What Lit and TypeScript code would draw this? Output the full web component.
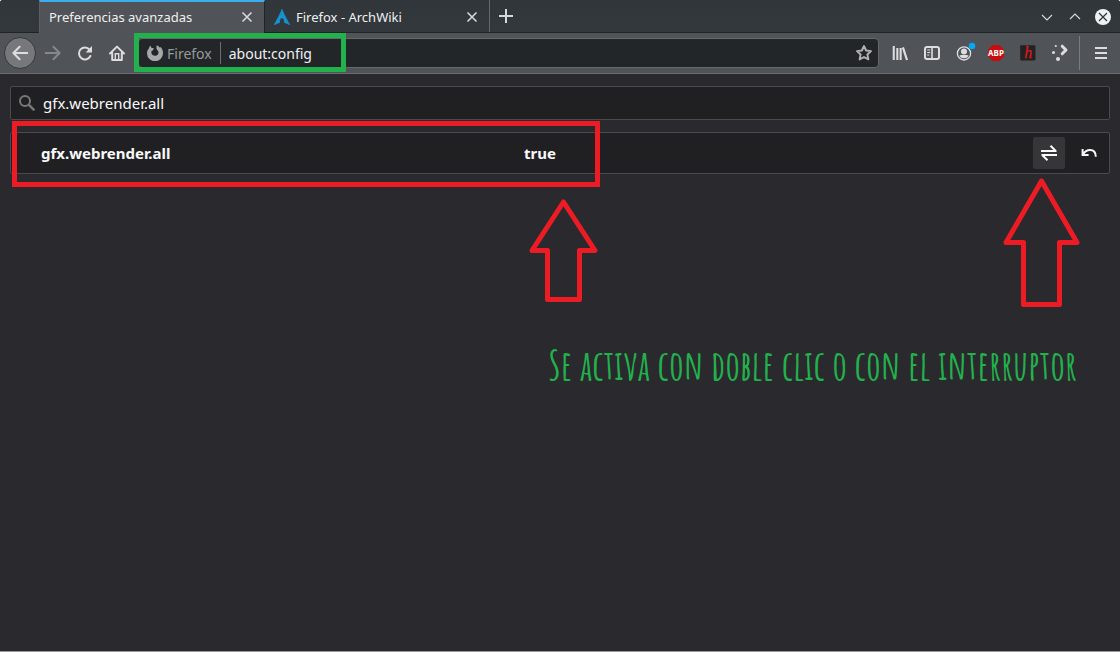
import { LitElement, html, css, svg } from "lit";
import { customElement, state } from "lit/decorators.js";

const closeIcon = html`<svg width="12" height="12" viewBox="0 0 12 12" fill="none" stroke="#d5d7d8" stroke-width="1.6"><path d="M1.5 1.5l9 9M10.5 1.5l-9 9" /></svg>`;

const backIcon = svg`<path d="M15.3 8H1.5M7.6 1.8L1.4 8l6.2 6.2" fill="none" stroke="currentColor" stroke-width="2" stroke-linecap="round" stroke-linejoin="round"/>`;
const forwardIcon = svg`<path d="M.7 8h13.8M8.4 1.8L14.6 8l-6.2 6.2" fill="none" stroke="currentColor" stroke-width="2" stroke-linecap="round" stroke-linejoin="round"/>`;
const reloadIcon = svg`<path d="M12.6 4.6A6 6 0 1 0 13.4 11" fill="none" stroke="currentColor" stroke-width="2" stroke-linecap="round"/><path d="M15 1v6.4H8.6z" fill="currentColor"/>`;
const homeIcon = svg`<path d="M1 8.500L8 1.600l7 6.900M3.200 8v6.900h9.600V8" fill="none" stroke="currentColor" stroke-width="2" stroke-linecap="round" stroke-linejoin="round"/><path d="M6.300 15V8.800h3.400V15" fill="none" stroke="currentColor" stroke-width="1.400"/>`;
const libraryIcon = svg`<path d="M.7 1h2.100v14H.7zM4.300 3h2.100v12H4.300zM7.600 3h2.100v12H7.600z" fill="currentColor"/><path d="M10.900 2.400L15 15" fill="none" stroke="currentColor" stroke-width="2.200"/>`;
const sidebarIcon = svg`<rect x="1" y="2" width="14" height="12" rx="2" fill="none" stroke="currentColor" stroke-width="2"/><path d="M8 2v12" stroke="currentColor" stroke-width="1.600"/><path d="M3.200 5h3M3.200 7.500h3M3.200 10h2" stroke="currentColor" stroke-width="1.100"/>`;
const accountIcon = svg`<circle cx="8" cy="8.400" r="6.600" fill="none" stroke="currentColor" stroke-width="1.300"/><circle cx="8" cy="6.400" r="3" fill="currentColor"/><path d="M3.300 11c1-1.400 2.500-1 4.700-1s3.700-.4 4.700 1A5.700 5.700 0 0 1 8 13.300 5.700 5.700 0 0 1 3.300 11z" fill="currentColor"/><circle cx="16" cy="1" r="3.300" fill="#00a8f5"/>`;
const hypothesisIcon = svg`<rect x=".2" y=".2" width="15.200" height="15.200" rx="1" fill="#222"/><text x="8.200" y="13" text-anchor="middle" font-family="Liberation Serif, serif" font-style="italic" font-size="16" fill="#d91820" stroke="#d91820" stroke-width=".3">h</text>`;
const abpIcon = svg`<path d="M4.700 0h6.600L16 4.700v6.600L11.300 16H4.700L0 11.300V4.700z" fill="#c70d0d"/><text x="8" y="11" text-anchor="middle" font-family="Noto Sans, sans-serif" font-weight="700" font-size="8" fill="#fff">ABP</text>`;
const dotsIcon = svg`<circle cx="3.800" cy="1" r="1.100" fill="currentColor"/><circle cx="1.500" cy="7.400" r="1.500" fill="currentColor"/><circle cx="6" cy="14" r="2" fill="currentColor"/><path d="M10.200 1.200L14 5l-3.800 3.800" fill="none" stroke="currentColor" stroke-width="3" stroke-linecap="round" stroke-linejoin="round"/>`;
const menuIcon = svg`<path d="M2 3h12M2 8h12M2 13h12" stroke="currentColor" stroke-width="2"/>`;

const glyph = (content: unknown) => html`<svg class="glyph" width="16" height="16" viewBox="0 0 16 16">${content}</svg>`;

@customElement("app-root")
export class AppRoot extends LitElement {
  @state() private enabled = true;

  static styles = css`
    :host {
      display: block;
      font-family: "Noto Sans", "Open Sans", sans-serif;
      color: #eff0f1;
    }
    * { box-sizing: border-box; }
    svg { display: block; flex: none; }
    .glyph { overflow: visible; }
    button {
      display: flex;
      align-items: center;
      justify-content: center;
      flex: none;
      margin: 0;
      padding: 0;
      border: 0;
      background: none;
      color: inherit;
      font: inherit;
    }
    input {
      flex: 1;
      min-width: 0;
      margin: 0;
      padding: 0;
      border: 0;
      outline: 0;
      background: none;
      color: inherit;
      font: inherit;
    }
    .window {
      position: relative;
      display: flex;
      flex-direction: column;
      min-height: 100vh;
      overflow: hidden;
      border-bottom: 1px solid #98989a;
      border-radius: 3px 3px 0 0;
      background: #2a2a2e;
    }
    .tabs {
      display: flex;
      height: 33px;
      padding-left: 39px;
      border-bottom: 1px solid #202427;
      background: linear-gradient(#30363a, #33383c);
      font-size: 13px;
    }
    .tab {
      display: flex;
      align-items: center;
      flex: 0 1 225px;
      min-width: 0;
      padding: 2px 11px 0 9px;
      border-right: 1px solid #66696c;
    }
    .tab.active {
      flex-basis: 226px;
      height: 33px;
      border-top: 2px solid #3daee9;
      border-left: 1px solid #5b5f62;
      border-right-color: #202427;
      padding-top: 0;
      padding-bottom: 1px;
      background: #505357;
    }
    .tab a {
      flex: 1;
      overflow: hidden;
      white-space: nowrap;
      color: inherit;
      text-decoration: none;
    }
    .favicon { margin-right: 6px; }
    .newtab { width: 32px; }
    .controls {
      display: flex;
      align-items: center;
      gap: 12px;
      margin-left: auto;
      padding: 2px 9px 0 0;
      color: #d5d7d8;
    }
    .controls button { width: 16px; }
    .toolbar {
      display: flex;
      align-items: center;
      height: 41px;
      padding: 0 3px 0 4px;
      border-bottom: 1px solid #6a6d70;
      background: #505357;
      color: #dcdddf;
    }
    .tool { width: 32px; height: 32px; }
    .back {
      margin-right: 1px;
      border: 1px solid #34383b;
      border-radius: 50%;
      background: #77787c;
    }
    .forward { color: #85888b; }
    .address {
      display: flex;
      align-items: center;
      flex: 1;
      min-width: 0;
      height: 30px;
      margin: 0 5px;
      padding: 0 6px 0 8px;
      border: 1px solid #66696c;
      border-radius: 4px;
      background: #232629;
      font-size: 14px;
    }
    .address input { color: #eff0f1; }
    .identity {
      display: flex;
      align-items: center;
      gap: 4px;
      height: 22px;
      margin-right: 8px;
      padding-right: 8px;
      border-right: 1px solid #6c6f71;
      color: #97999b;
    }
    .star { color: #b0b2b4; }
    .divider {
      width: 1px;
      height: 34px;
      margin: 0 5px 0 3px;
      background: #7a7d80;
    }
    .page {
      display: flex;
      flex-direction: column;
      gap: 12px;
      padding: 12px 10px;
      font-size: 15px;
      color: #f9f9fa;
    }
    .search {
      display: flex;
      align-items: center;
      gap: 8px;
      height: 34px;
      padding: 0 8px;
      border: 1px solid #4b4b4d;
      border-radius: 2px;
      background: #202023;
    }
    .prefs {
      width: 100%;
      border: 1px solid #4b4b4d;
      border-radius: 2px;
      border-spacing: 0;
      background: #202023;
      font-weight: 700;
      text-align: left;
    }
    .prefs th, .prefs td { height: 40px; padding: 0; }
    .prefs .name { width: 46%; padding-left: 30px; }
    .prefs .value { padding-left: 8px; }
    .actions {
      display: flex;
      justify-content: flex-end;
      gap: 8px;
      padding-right: 4px;
    }
    .action { width: 32px; height: 32px; border-radius: 2px; }
    .toggle { background: #363638; }
    .frame, .pointer, .caption { position: absolute; pointer-events: none; }
    .frame-address {
      left: 134px;
      top: 33px;
      width: 212px;
      height: 39px;
      border: 5px solid #22b14c;
    }
    .frame-pref {
      left: 12px;
      top: 121px;
      width: 588px;
      height: 66px;
      border: 5px solid #ed1c24;
    }
    .pointer {
      overflow: visible;
      fill: none;
      stroke: #ed1c24;
      stroke-width: 5;
      stroke-linejoin: round;
    }
    .pointer-value { left: 529px; top: 199px; }
    .pointer-toggle { right: 40px; top: 178px; }
    .caption {
      right: 43px;
      top: 336px;
      margin: 0;
      color: #22b14c;
      font: 700 41px/56px "Amatic SC", "Liberation Sans Narrow", "Liberation Sans", sans-serif;
      white-space: nowrap;
    }
  `;

  render() {
    return html`
      <div class="window">
        <nav class="tabs" aria-label="Pestañas">
          <div class="tab active">
            <a href="#config">Preferencias avanzadas</a>
            <button aria-label="Cerrar pestaña">${closeIcon}</button>
          </div>
          <div class="tab">
            <svg class="favicon" width="16" height="16" viewBox="0 0 16 16"><path d="M8 0C7.300 1.800 6.800 3 5.900 4.800c.6.600 1.200 1.200 2.300 1.900-1.100-.400-1.900-.9-2.500-1.400C4.500 7.800 2.700 11.200 0 16c2.200-1.200 4-2 5.700-2.300-.3-2.800.8-4.700 2.300-4.700s2.600 1.900 2.300 4.700c1.700.3 3.500 1.100 5.700 2.300C13 10.700 9.300 4 8 0z" fill="#1793d1" stroke="#1793d1" stroke-width=".5" /></svg>
            <a href="#wiki">Firefox - ArchWiki</a>
            <button aria-label="Cerrar pestaña">${closeIcon}</button>
          </div>
          <button class="newtab" aria-label="Nueva pestaña">
            <svg width="14" height="14" viewBox="0 0 14 14" stroke="#d5d7d8" stroke-width="2"><path d="M7 0v14M0 7h14" /></svg>
          </button>
          <div class="controls">
            <button aria-label="Minimizar"><svg width="12" height="12" viewBox="0 0 12 12" fill="none" stroke="currentColor" stroke-width="1.200"><path d="M1 4l5 5 5-5" /></svg></button>
            <button aria-label="Maximizar"><svg width="12" height="12" viewBox="0 0 12 12" fill="none" stroke="currentColor" stroke-width="1.200"><path d="M1 8l5-5 5 5" /></svg></button>
            <button aria-label="Cerrar"><svg width="16" height="16" viewBox="0 0 16 16"><circle cx="8" cy="8" r="8" fill="#eff0f1" /><path d="M4 4l8 8M12 4l-8 8" stroke="#31363b" stroke-width="1.200" /></svg></button>
          </div>
        </nav>

        <div class="toolbar">
          <button class="tool back" aria-label="Atrás">${glyph(backIcon)}</button>
          <button class="tool forward" aria-label="Adelante">${glyph(forwardIcon)}</button>
          <button class="tool" aria-label="Recargar">${glyph(reloadIcon)}</button>
          <button class="tool" aria-label="Inicio">${glyph(homeIcon)}</button>
          <div class="address">
            <div class="identity">
              <svg width="16" height="16" viewBox="0 0 16 16"><path d="M3.500.5l.8 2.200 2.500.5-.6 1.700-1.800 1.300C4.200 8.500 4.800 9.300 5.600 10c1.500 1.200 4 1.100 5.200-.4 1.200-1.600.8-3.700-.6-4.700L9.400 3.600 9.600.6c1.500.3 2.600 1.100 3.300 2.100l.7-.8C15.200 3.600 16 5.600 16 8a8 8 0 0 1-16 .4C0 6.300.6 5 1.700 3.700 2 2.500 2.600 1.400 3.500.5z" fill="#a5a7a9" /></svg>
              <span>Firefox</span>
            </div>
            <input aria-label="Dirección" .value=${"about:config"} />
            <button class="star" aria-label="Añadir a marcadores">
              <svg width="16" height="16" viewBox="0 0 16 16" fill="none" stroke="currentColor" stroke-width="1.900" stroke-linejoin="round"><path d="M8 1l2.100 4.500 4.900.6-3.600 3.400 1 4.900L8 12l-4.400 2.400 1-4.900L1 6.100l4.900-.6z" /></svg>
            </button>
          </div>
          <button class="tool" aria-label="Biblioteca">${glyph(libraryIcon)}</button>
          <button class="tool" aria-label="Barra lateral">${glyph(sidebarIcon)}</button>
          <button class="tool" aria-label="Cuenta">${glyph(accountIcon)}</button>
          <button class="tool" aria-label="Adblock Plus">${glyph(abpIcon)}</button>
          <button class="tool" aria-label="Hypothesis">${glyph(hypothesisIcon)}</button>
          <button class="tool" aria-label="Extensión">${glyph(dotsIcon)}</button>
          <span class="divider"></span>
          <button class="tool" aria-label="Menú"><svg width="14" height="16" viewBox="1 0 14 16">${menuIcon}</svg></button>
        </div>

        <main class="page">
          <label class="search">
            <svg width="16" height="16" viewBox="0 0 16 16" fill="none" stroke="#78787a" stroke-width="2"><circle cx="6" cy="6" r="5" /><path d="M9.700 9.700l5.600 5.600" stroke-width="2.400" /></svg>
            <input aria-label="Buscar preferencia" .value=${"gfx.webrender.all"} />
          </label>
          <table class="prefs">
            <tr @dblclick=${this.toggle}>
              <th class="name" scope="row">gfx.webrender.all</th>
              <td class="value">${this.enabled}</td>
              <td>
                <div class="actions">
                  <button class="action toggle" aria-label="Alternar" @click=${this.toggle}>
                    <svg width="16" height="16" viewBox="0 0 16 16" fill="none" stroke="currentColor" stroke-width="2"><path d="M0 6h15.500M9.500.7L14.800 6M16 10H.5M6.500 15.300L1.200 10" /></svg>
                  </button>
                  <button class="action" aria-label="Restablecer">
                    <svg width="16" height="16" viewBox="0 0 16 16" fill="none" stroke="currentColor" stroke-width="2"><path d="M1.600 4v6h6M2 9.500C4 6 6.500 5 9 5c3.500 0 5.800 2.500 5.800 6.800" /></svg>
                  </button>
                </div>
              </td>
            </tr>
          </table>
        </main>

        <div class="frame frame-address"></div>
        <div class="frame frame-pref"></div>
        <svg class="pointer pointer-value" width="69" height="103" viewBox="0 0 69 103"><path d="M34.500 3L66 51.500H50.500V100.500H18.500V51.500H3z" /></svg>
        <svg class="pointer pointer-toggle" width="77" height="129" viewBox="0 0 77 129"><path d="M38.500 3L74 64.500H56.500V126.500H20.500V64.500H3z" /></svg>
        <p class="caption">Se activa con doble clic o con el interruptor</p>
      </div>
    `;
  }

  private toggle() {
    this.enabled = !this.enabled;
  }
}
